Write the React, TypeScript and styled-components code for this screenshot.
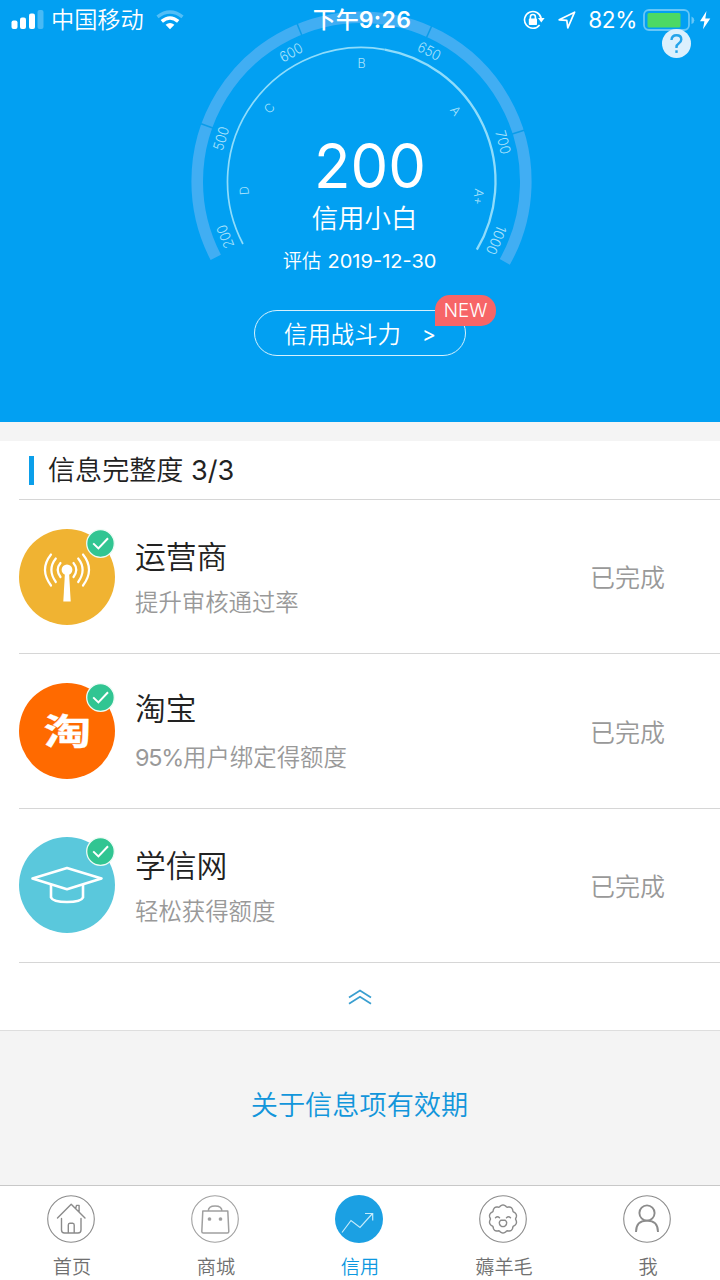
import React from 'react';
import styled, { createGlobalStyle } from 'styled-components';

const GlobalStyle = createGlobalStyle`
  *, *::before, *::after { box-sizing: border-box; }
  body {
    margin: 0;
    background: #f4f4f4;
    font-family: Inter, "Noto Sans CJK SC", sans-serif;
    font-weight: 350;
    color: #333;
  }
`;

const Screen = styled.main`
  width: 720px;
  height: 1280px;
  display: flex;
  flex-direction: column;
  overflow: hidden;
  background: #f4f4f4;
`;

const Hero = styled.header`
  position: relative;
  flex: none;
  height: 422px;
  background: #02a0f2;
  color: #fff;
  display: flex;
  flex-direction: column;
  align-items: center;
`;

const StatusBar = styled.div`
  position: absolute;
  inset: 0 0 auto 0;
  height: 40px;
  padding: 0 9px 0 11px;
  display: grid;
  grid-template-columns: 1fr auto 1fr;
  align-items: center;
  color: #fff;
`;

const StatusGroup = styled.div<{ $end?: boolean }>`
  display: flex;
  align-items: center;
  justify-content: ${(p) => (p.$end ? 'flex-end' : 'flex-start')};
`;

const Carrier = styled.span`
  margin: 0 12px 0 7px;
  font-size: 23.2px;
  line-height: 40px;
`;

const Clock = styled.span`
  margin-left: 2px;
  font-size: 23px;
  line-height: 40px;
  font-weight: 500;

  b {
    font-weight: 600;
    letter-spacing: 0.4px;
  }
`;

const Percent = styled.span`
  margin: 0 6px 0 12px;
  font-size: 22.6px;
  line-height: 40px;
  font-weight: 400;
  letter-spacing: -0.4px;
`;

const HelpBadge = styled.div`
  position: absolute;
  top: 29px;
  right: 29px;
  width: 29px;
  height: 29px;
  border-radius: 50%;
  background: #dcf0fd;
  display: flex;
`;

const Gauge = styled.svg`
  flex: none;
  width: 720px;
  height: 310px;
`;

const PowerButton = styled.div`
  position: relative;
  width: 212px;
  height: 46px;
  border: 1.4px solid #d5f1fd;
  border-radius: 23px;
  padding: 3px 0 0 29px;
  display: flex;
  align-items: center;
  gap: 21px;
  font-size: 23.4px;
  line-height: 40px;
`;

const Chevron = styled.span`
  font-size: 21px;
  font-weight: 400;
`;

const NewTag = styled.span`
  position: absolute;
  top: -16px;
  right: -31px;
  width: 61px;
  height: 31px;
  border-radius: 15px 15px 15px 0;
  background: #f76567;
  font-size: 18.8px;
  line-height: 32px;
  text-align: center;
`;

const Panel = styled.section`
  flex: none;
  margin-top: 19px;
  height: 590px;
  background: #fff;
  border-bottom: 1px solid #dedede;
  display: flex;
  flex-direction: column;
`;

const PanelTitle = styled.h2`
  margin: 0;
  height: 58px;
  padding-left: 29px;
  display: flex;
  align-items: center;
  gap: 14px;
  font-size: 27.1px;
  line-height: 56px;
  font-weight: 350;
  color: #222;

  &::before {
    content: '';
    width: 5px;
    height: 29px;
    background: #0b9fea;
  }
`;

const TitleText = styled.span`
  padding-top: 2px;
`;

const Latin = styled.span<{ $tight?: number }>`
  font-weight: 400;
  letter-spacing: ${(p) => -(p.$tight ?? 0)}px;
`;

const Row = styled.div`
  height: 154.4px;
  margin-left: 19px;
  padding: 0 55px 0 0;
  border-top: 1px solid #d6d6d6;
  display: flex;
  align-items: center;
`;

const RowIcon = styled.div<{ $color: string }>`
  position: relative;
  width: 96px;
  height: 96px;
  border-radius: 50%;
  background: ${(p) => p.$color};
`;

const Check = styled.svg`
  position: absolute;
  top: 0;
  right: 0;
  width: 29px;
  height: 29px;
`;

const RowText = styled.div`
  flex: 1;
  margin-left: 20px;
`;

const RowName = styled.div<{ $lift?: number }>`
  margin-top: ${(p) => 2 - (p.$lift ?? 0)}px;
  font-size: 30.8px;
  line-height: 46px;
  color: #222;
`;

const RowNote = styled.div<{ $drop?: number }>`
  margin-top: ${(p) => 5 + (p.$drop ?? 0)}px;
  font-size: 23.4px;
  line-height: 36px;
  color: #999;
`;

const RowState = styled.div`
  font-size: 25px;
  line-height: 36px;
  padding-top: 3px;
  color: #999;
`;

const Collapse = styled.div`
  flex: 1;
  margin-left: 19px;
  border-top: 1px solid #d6d6d6;
  display: flex;
  align-items: center;
  justify-content: center;
  padding: 1px 19px 0 0;
`;

const Validity = styled.div`
  flex: 1;
  display: flex;
  align-items: center;
  justify-content: center;
  padding: 0 1px 10px 0;
  font-size: 27.2px;
  color: #1296db;
`;

const TabBar = styled.nav`
  flex: none;
  height: 95px;
  border-top: 1px solid #c8c8c8;
  background: #fff;
  display: grid;
  grid-template-columns: repeat(5, 1fr);
`;

const Tab = styled.div<{ $active?: boolean }>`
  display: flex;
  flex-direction: column;
  align-items: center;
  padding-top: 7.5px;
  font-size: 19.2px;
  line-height: 28px;
  color: ${(p) => (p.$active ? '#0d98e0' : '#707070')};

  svg {
    width: 50px;
    height: 50px;
    margin: 0 2px 9.5px 0;
  }
`;

const CX = 361.5;
const CY = 181.5;

const point = (deg: number, r: number) => {
  const a = (deg * Math.PI) / 180;
  return `${(CX + r * Math.sin(a)).toFixed(2)} ${(CY - r * Math.cos(a)).toFixed(2)}`;
};

const arc = (from: number, to: number, r: number) =>
  `M${point(from, r)}A${r} ${r} 0 ${to - from > 180 ? 1 : 0} 1 ${point(to, r)}`;

const scores = [
  { text: '200', deg: -112, w: 24 },
  { text: '500', deg: -73, w: 24 },
  { text: '600', deg: -28.6, w: 24 },
  { text: '650', deg: 27.5, w: 24 },
  { text: '700', deg: 74.5, w: 24 },
  { text: '1000', deg: 113.5, w: 30 },
];

const grades = [
  { text: 'D', deg: -94.5 },
  { text: 'C', deg: -51.5 },
  { text: 'B', deg: 0 },
  { text: 'A', deg: 53 },
  { text: 'A+', deg: 97.5 },
];

function CreditGauge() {
  return (
    <Gauge viewBox="0 0 720 310">
      <g fill="none">
        <path d={arc(-117.5, 119.3, 164.3)} stroke="#41aef3" strokeWidth="11.6" />
        {[-70.2, -22.2, 24.3, 72.5].map((d) => (
          <path key={d} d={`M${point(d, 158)}L${point(d, 170.5)}`} stroke="#0a9ce9" strokeWidth="1.5" />
        ))}
        <path d={arc(-117.8, 10, 134)} stroke="#8fdcfb" strokeWidth="1.7" />
        <path d={arc(10, 120.6, 134)} stroke="#8fdcfb" strokeWidth="2.3" />
      </g>
      <g fill="#a9e2fc" textAnchor="middle">
        {scores.map((s) => (
          <text
            key={s.text}
            transform={`translate(${point(s.deg, 146.8)}) rotate(${s.deg})`}
            y="5"
            fontSize="14.4"
            textLength={s.w}
            lengthAdjust="spacingAndGlyphs"
          >
            {s.text}
          </text>
        ))}
        {grades.map((g) => (
          <text
            key={g.text}
            transform={`translate(${point(g.deg, 117.8)}) rotate(${g.deg})`}
            y="4.5"
            fontSize="12.5"
          >
            {g.text}
          </text>
        ))}
      </g>
      <g fill="#fff" textAnchor="middle">
        <text x="370" y="188.3" fontSize="62" fontWeight="400" textLength="112" lengthAdjust="spacingAndGlyphs">200</text>
        <text x="364.5" y="227.5" fontSize="26.4">信用小白</text>
        <text x="302" y="268" fontSize="19.2">评估</text>
        <text x="382" y="268" fontSize="19.2" fontWeight="400" textLength="109" lengthAdjust="spacingAndGlyphs">2019-12-30</text>
      </g>
    </Gauge>
  );
}

function SignalIcon() {
  return (
    <svg width="33" height="20" viewBox="0 0 33 20" fill="#fff">
      <rect x="0.5" y="10.5" width="6" height="8.5" rx="2" />
      <rect x="9" y="7.5" width="6" height="11.5" rx="2" />
      <rect x="18" y="3.5" width="6" height="15.5" rx="2" />
      <rect x="26.5" y="0" width="6" height="19" rx="2" opacity="0.28" />
    </svg>
  );
}

function WifiIcon() {
  return (
    <svg width="28" height="20" viewBox="0 0 28 20" fill="none" stroke="#fff">
      <path d="M1.5 6.8Q14-3 26.5 6.8" strokeWidth="3.4" opacity="0.32" />
      <path d="M5.8 11.4Q14 4.6 22.2 11.4" strokeWidth="3.6" />
      <path d="M9.6 14.8Q14 11.4 18.4 14.8L14 19.2Z" fill="#fff" stroke="none" />
    </svg>
  );
}

function LockIcon() {
  return (
    <svg width="22" height="20" viewBox="0 0 22 20" fill="none" stroke="#fff" strokeWidth="1.6">
      <path d="M16.6 15A8.4 8.4 0 1 1 18.2 8.5" />
      <path d="M15 8h6.6l-3.3 4.6z" fill="#fff" stroke="none" />
      <rect x="5.8" y="8.6" width="8.2" height="6.4" rx="0.8" fill="#fff" stroke="none" />
      <path d="M7.4 9V7a2.5 2.5 0 0 1 5 0v2" />
    </svg>
  );
}

function LocationIcon() {
  return (
    <svg width="18" height="18" viewBox="0 0 18 18" fill="none" stroke="#fff" strokeWidth="1.7" strokeLinejoin="round">
      <path d="M1.2 8.8 16.6 1.2 9.8 16.8 8.8 9.4Z" />
    </svg>
  );
}

function BatteryIcon() {
  return (
    <svg width="68" height="23" viewBox="0 0 68 23" fill="none">
      <rect x="1" y="1" width="45" height="20" rx="5" stroke="#67c6f7" strokeWidth="1.8" />
      <rect x="4.5" y="4" width="33" height="14.5" rx="1.5" fill="#4cd964" />
      <path d="M48.5 7.5q2.8 1 2.8 3.8t-2.8 3.8z" fill="#67c6f7" />
      <path d="M63.5 2 57 12.3h4.4L60 20.3 67.3 9.6h-5Z" fill="#fff" />
    </svg>
  );
}

function DoneMark() {
  return (
    <Check viewBox="0 0 29 29">
      <circle cx="14.5" cy="14.5" r="13.8" fill="#31c592" stroke="#eefbf5" strokeWidth="1.3" />
      <path d="m7.2 14.4 5.2 5 9.6-10.2" fill="none" stroke="#fff" strokeWidth="2" />
    </Check>
  );
}

function AntennaIcon() {
  return (
    <svg width="96" height="96" viewBox="0 0 96 96" fill="none" stroke="#fff" strokeWidth="2.2" strokeLinecap="round">
      <circle cx="48" cy="40.8" r="5.4" fill="#fff" stroke="none" />
      <path d="M46 43h4l1.7 29.5h-7.4z" fill="#fff" stroke="none" />
      <path d="M41.5 34q-5.5 6.5 0 14M36.8 29.5q-8.8 11 0 23.5M32 25.5q-12 15 0 31" />
      <path d="M54.5 34q5.5 6.5 0 14M59.2 29.5q8.8 11 0 23.5M64 25.5q12 15 0 31" />
    </svg>
  );
}

const TaoMark = styled.text`
  font-family: "Noto Sans CJK SC", sans-serif;
  font-weight: 700;
`;

function TaoIcon() {
  return (
    <svg width="96" height="96" viewBox="0 0 96 96">
      <TaoMark
        transform="translate(48.3 62) scale(1.31 1)"
        textAnchor="middle"
        fontSize="36.5"
        fill="#fff"
        stroke="#fff"
        strokeWidth="0.3"
        strokeLinejoin="round"
      >
        淘
      </TaoMark>
    </svg>
  );
}

function CapIcon() {
  return (
    <svg width="96" height="96" viewBox="0 0 96 96" fill="none" stroke="#fff" strokeWidth="2.6" strokeLinejoin="round">
      <path d="M48 31 13.5 41.5 48 52.3 82.5 41.5Z" />
      <path d="M32 47.5v13q2 4.5 16 4.5t16-4.5v-13" />
    </svg>
  );
}

const items = [
  { name: '运营商', lift: 0, drop: 0, note: '提升审核通过率', color: '#f0b332', icon: <AntennaIcon /> },
  { name: '淘宝', lift: 3, drop: 3, lead: '95%', note: '用户绑定得额度', color: '#ff6a00', icon: <TaoIcon /> },
  { name: '学信网', lift: 0, drop: 0, note: '轻松获得额度', color: '#5ac8dc', icon: <CapIcon /> },
];

const Ring = () => <circle cx="25" cy="25" r="23.3" strokeWidth="1.1" />;

function flowerPath() {
  const steps = 90;
  return (
    Array.from({ length: steps }, (_, i) => {
      const a = (i / steps) * Math.PI * 2;
      const r = 12.3 + 1.7 * Math.abs(Math.cos(a * 5));
      return `${i ? 'L' : 'M'}${(25 + r * Math.sin(a)).toFixed(2)} ${(25 - r * Math.cos(a)).toFixed(2)}`;
    }).join('') + 'Z'
  );
}

const tabs = [
  {
    label: '首页',
    icon: (
      <svg viewBox="0 0 50 50" fill="none" stroke="#8b8b8b" strokeWidth="1.4" strokeLinecap="round" strokeLinejoin="round">
        <Ring />
        <path d="m11.5 24 13.7-13.8L39 24M15.5 24.5V36q0 3 3 3H32q3 0 3-3V24.5M22.3 38.5V31q0-1.8 1.5-1.8h2.9q1.5 0 1.5 1.8v7.5M29.7 14.2l.8-2.8h2.6v6.3" />
      </svg>
    ),
  },
  {
    label: '商城',
    icon: (
      <svg viewBox="0 0 50 50" fill="none" stroke="#a0a0a0" strokeWidth="1.5" strokeLinejoin="round">
        <Ring />
        <path d="M12.8 17h25l1 20.5q0 1.5-1.5 1.5h-24q-1.5 0-1.5-1.5ZM18.3 17q0-5 6.8-5t6.8 5" />
        <circle cx="19.5" cy="25" r="1.1" fill="#888" />
        <circle cx="30.5" cy="25" r="1.1" fill="#888" />
      </svg>
    ),
  },
  {
    label: '信用',
    active: true,
    icon: (
      <svg viewBox="0 0 50 50" fill="none" stroke="#c5ebfb" strokeWidth="1.2">
        <circle cx="25" cy="25" r="24" fill="#1ba0e3" stroke="none" />
        <path d="m8 38.5 9-12 9 7L38.5 19.5M31 19.5h7.7v7" />
      </svg>
    ),
  },
  {
    label: '薅羊毛',
    icon: (
      <svg viewBox="0 0 50 50" fill="none" stroke="#8b8b8b" strokeWidth="1.4" strokeLinecap="round">
        <Ring />
        <path d={flowerPath()} />
        <path d="M17.5 23.8q2-2 4 0M28.5 23.8q2-2 4 0" />
        <path d="M22.8 26.3h4.4q2 1.4 1.3 3.6-1 2.7-3.5 2.7t-3.5-2.7q-.7-2.2 1.3-3.6Z" />
      </svg>
    ),
  },
  {
    label: '我',
    icon: (
      <svg viewBox="0 0 50 50" fill="none" stroke="#8b8b8b" strokeWidth="1.9">
        <Ring />
        <circle cx="25" cy="19" r="7.6" />
        <path d="M14 38q0-11.4 11-11.4t11 11.4" />
      </svg>
    ),
  },
];

export default function App() {
  return (
    <Screen>
      <GlobalStyle />
      <Hero>
        <CreditGauge />
        <PowerButton>
          信用战斗力
          <Chevron>&gt;</Chevron>
          <NewTag>NEW</NewTag>
        </PowerButton>
        <StatusBar>
          <StatusGroup>
            <SignalIcon />
            <Carrier>中国移动</Carrier>
            <WifiIcon />
          </StatusGroup>
          <Clock>下午<b>9:26</b></Clock>
          <StatusGroup $end>
            <LockIcon />
            <svg width="13" height="1" />
            <LocationIcon />
            <Percent>82%</Percent>
            <BatteryIcon />
          </StatusGroup>
        </StatusBar>
        <HelpBadge>
          <svg viewBox="0 0 29 29" fill="none" stroke="#25a4ea" strokeWidth="2.4">
            <path d="M9.5 11q.3-4.7 5-4.7 4.8 0 4.8 4.2 0 2.2-2.6 3.9-2.2 1.4-2.2 3.6v1" />
            <path d="M14.5 21.3v2.6" />
          </svg>
        </HelpBadge>
      </Hero>

      <Panel>
        <PanelTitle>
          <TitleText>信息完整度 <Latin>3/3</Latin></TitleText>
        </PanelTitle>
        {items.map((it) => (
          <Row key={it.name}>
            <RowIcon $color={it.color}>
              {it.icon}
              <DoneMark />
            </RowIcon>
            <RowText>
              <RowName $lift={it.lift}>{it.name}</RowName>
              <RowNote $drop={it.drop}>
                {it.lead && <Latin $tight={1.2}>{it.lead}</Latin>}
                {it.note}
              </RowNote>
            </RowText>
            <RowState>已完成</RowState>
          </Row>
        ))}
        <Collapse>
          <svg width="24" height="16" viewBox="0 0 24 16" fill="none" stroke="#3a9fd0" strokeWidth="1.8">
            <path d="M1 8.5 12 1.5l11 7M1 14.8l11-7 11 7" />
          </svg>
        </Collapse>
      </Panel>

      <Validity>关于信息项有效期</Validity>

      <TabBar>
        {tabs.map((t) => (
          <Tab key={t.label} $active={t.active}>
            {t.icon}
            {t.label}
          </Tab>
        ))}
      </TabBar>
    </Screen>
  );
}
